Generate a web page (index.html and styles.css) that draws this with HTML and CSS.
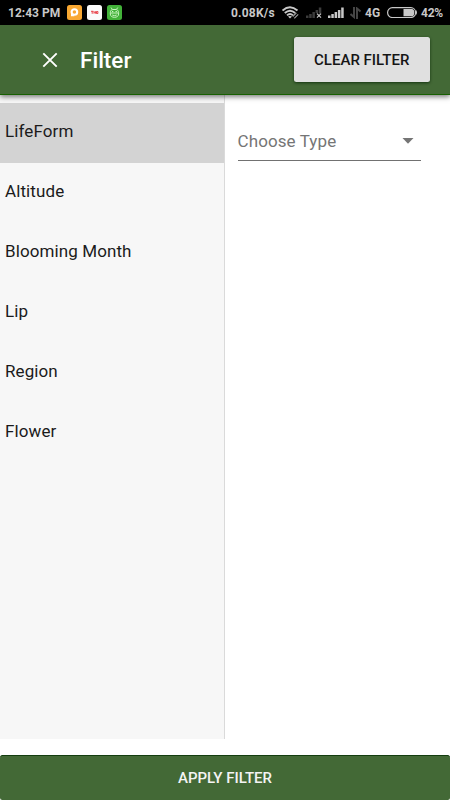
FILE: index.html
```html
<!DOCTYPE html>
<html lang="en">
<head>
<meta charset="utf-8">
<title>Filter</title>
<link rel="stylesheet" href="styles.css">
</head>
<body>
<div class="status">
  <span class="time">12:43 PM</span>
  <div class="apps">
    <svg width="15" height="15" viewBox="0 0 15 15"><rect width="15" height="15" rx="2.5" fill="#f9a832"/><circle cx="7.4" cy="7" r="2.8" fill="none" stroke="#fff" stroke-width="2.1"/><path d="M4 7v4.2h3.5z" fill="#fff"/></svg>
    <svg width="15" height="15" viewBox="0 0 15 15"><rect width="15" height="15" rx="2.5" fill="#fafafa"/><path d="M4 6.3h2.4M5.2 6.3v2.5M7 8.7V6.5l.8 1 .8-1v2.2M9.5 6.5h1.4v2H9.5z" fill="none" stroke="#e6323a" stroke-width=".9"/></svg>
    <svg width="15" height="15" viewBox="0 0 15 15"><rect width="15" height="15" rx="2.5" fill="#42b239"/><path d="M4 2.5l1.4 2h4l1.4-2M5.2 4.5C3.5 5.2 3.2 7 3.3 9c.1 2.2 1.7 3.3 4.2 3.3s4-1.1 4.1-3.3c.1-2-.3-3.8-2-4.5M3.5 8h8M5.2 10q2.2 1.3 4.5 0" fill="none" stroke="#c9f3bf" stroke-width="1"/><circle cx="5.7" cy="6.5" r=".7" fill="#d9ffd0"/><circle cx="9.2" cy="6.5" r=".7" fill="#d9ffd0"/></svg>
  </div>
  <span class="speed">0.08K/s</span>
  <svg class="wifi" width="18" height="14" viewBox="0 0 18 14" fill="none" stroke="#c8c8c8"><path d="M.5 4.5Q8-2 15.500 4.500M2.800 7Q8 2.300 13.200 7M5 9.400Q8 6.600 11 9.400" stroke-width="1.900"/><path d="M6 10.400L8 12.500 10 10.400Q8 9.400 6 10.400z" fill="#c8c8c8" stroke="none"/><path d="M10.700 10.500l3.700-3.700M12.300 12.300l3.900-3.900" stroke="#9c9c9c" stroke-width="1.200"/></svg>
  <svg class="nosignal" width="16" height="12" viewBox="0 0 16 12"><path d="M0 8.500h2.500v2.500H0zM3.200 7h2.500v4H3.200zM6.400 5h2.500v6H6.400zM9.600 3h2.500v3H9.600zM12.800.5h2.500v6h-2.500z" fill="#3c3c3c"/><path d="M11 6.700l4 4m0-4l-4 4" stroke="#c8c8c8" stroke-width="1.200"/></svg>
  <svg class="signal" width="16" height="12" viewBox="0 0 16 12"><path d="M0 8.500h2.500V11H0zM3.300 7h2.500v4H3.300zM6.600 5h2.500v6H6.600zM9.900 3h2.500v8H9.900zM13.200.5h2.500V11h-2.500z" fill="#c8c8c8"/></svg>
  <svg class="arrows" width="11" height="12" viewBox="0 0 11 12" fill="none" stroke="#464646" stroke-width="2"><path d="M4 0v10L.5 7M7 12V1.500L10.500 4.500"/></svg>
  <span class="net">4G</span>
  <svg class="battery" width="31" height="11" viewBox="0 0 31 11"><rect x=".6" y=".7" width="28" height="9.800" rx="4.700" fill="none" stroke="#c8c8c8" stroke-width="1.200"/><path d="M16.500 2h8.500q2.300 0 2.300 3.600T25 9.200h-8.500z" fill="#c8c8c8"/><path d="M29 3q2 2.500 0 5z" fill="#c8c8c8"/></svg>
  <span class="percent">42%</span>
</div>
<header class="toolbar">
  <svg class="close" width="16" height="16" viewBox="0 0 16 16"><path d="M1.300 1.300l13.400 13.400m0-13.400l-13.400 13.400" stroke="#fff" stroke-width="1.900"/></svg>
  <h1>Filter</h1>
  <button class="clear">CLEAR FILTER</button>
</header>
<main>
  <nav>
    <div class="item active">LifeForm</div>
    <div class="item">Altitude</div>
    <div class="item">Blooming Month</div>
    <div class="item">Lip</div>
    <div class="item">Region</div>
    <div class="item">Flower</div>
  </nav>
  <section>
    <div class="select"><span>Choose Type</span><svg width="12" height="6" viewBox="0 0 12 6"><path d="M.5 0h11L6 5.700z" fill="#757575"/></svg></div>
  </section>
</main>
<button class="apply">APPLY FILTER</button>
</body>
</html>
```
FILE: styles.css
```css
* { box-sizing: border-box; }
body {
  margin: 0;
  width: 450px;
  height: 800px;
  display: flex;
  flex-direction: column;
  overflow: hidden;
  background: #fff;
  font-family: Roboto, "Liberation Sans", sans-serif;
  color: #1b1b1b;
}
svg { display: block; flex: none; }
button { border: 0; padding: 0; font-family: inherit; font-weight: 500; }
.status {
  height: 25px;
  flex: none;
  display: flex;
  align-items: center;
  background: #000;
  color: #c8c8c8;
  padding-left: 8px;
  font-size: 12px;
  font-weight: 700;
  line-height: 25px;
  white-space: nowrap;
}
.status span { padding-top: 1px; }
.time { width: 59px; }
.apps { display: flex; gap: 5px; width: 164px; }
.speed { width: 51px; letter-spacing: .2px; }
.wifi { margin-right: 6px; }
.nosignal { margin-right: 6px; margin-top: 1px; }
.signal { margin-right: 6px; margin-top: 1px; }
.arrows { margin-right: 4px; }
.net { width: 22px; }
.battery { margin-right: 3px; }
.percent { letter-spacing: -.2px; }
.toolbar {
  position: relative;
  height: 70px;
  flex: none;
  display: flex;
  align-items: center;
  padding: 0 20px 0 42px;
  background: #436936;
  border-bottom: 1px solid #176000;
  box-shadow: 0 2px 5px rgba(0, 0, 0, .5);
}
.toolbar h1 {
  margin: 0 auto 0 22px;
  color: #fff;
  font-size: 22.5px;
  font-weight: 500;
  line-height: 30px;
}
.clear {
  width: 136.5px;
  height: 45px;
  border-radius: 2.5px;
  background: #e0e0e0;
  color: #151515;
  font-size: 15px;
  box-shadow: 0 1px 3px rgba(0, 30, 0, .7);
}
main { display: flex; height: 644px; flex: none; }
nav {
  width: 225px;
  padding-top: 7.5px;
  background: #f7f7f7;
  border-right: 1px solid #dadada;
}
.item {
  height: 60px;
  padding-left: 5px;
  font-size: 17px;
  line-height: 57px;
  letter-spacing: .1px;
}
.active { background: #d3d3d3; }
section { flex: 1; padding: 27px 29px 0 12.5px; }
.select {
  height: 39px;
  display: flex;
  align-items: center;
  justify-content: space-between;
  padding: 0 7px 0 0;
  border-bottom: 1px solid #717171;
  color: #757575;
  font-size: 17px;
  letter-spacing: .1px;
}
.apply {
  margin-top: 16px;
  height: 45px;
  flex: none;
  border-radius: 2.5px;
  border-top: 1px solid #143d10;
  background: #436936;
  color: #f4f4f4;
  font-size: 15px;
}
```
